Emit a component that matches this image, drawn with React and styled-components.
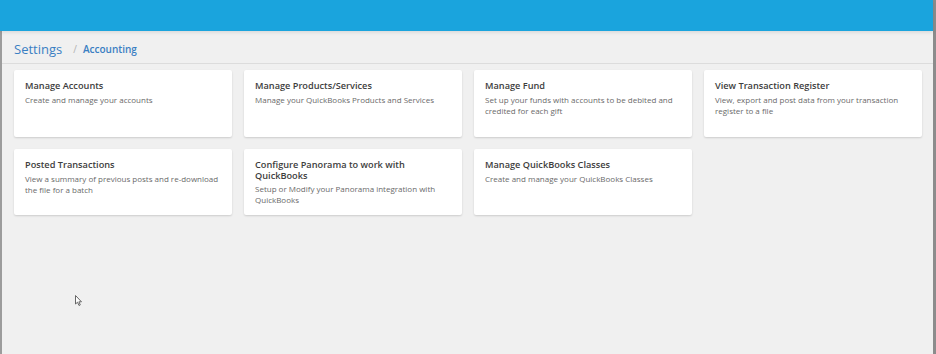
import React from "react";
import styled, { createGlobalStyle } from "styled-components";

const Global = createGlobalStyle`
  html, body { margin: 0; padding: 0; background: #f0f0f0; }
  body { font-family: "Open Sans", "Noto Sans", sans-serif; }
`;

const Frame = styled.div`
  display: flex;
  width: 936px;
  height: 354px;
  overflow: hidden;
  position: relative;
`;

const Main = styled.div`
  flex: 1;
  display: flex;
  flex-direction: column;
  min-width: 0;
`;

const ScrollEdge = styled.div`
  width: 3px;
  background: #8c8c8c;
`;

const Header = styled.header`
  height: 31px;
  background: #1aa4dd;
  box-shadow: 0 1px 4px rgba(0, 0, 0, 0.12);
  position: relative;
  z-index: 1;
`;

const Body = styled.div`
  flex: 1;
  border-left: 2px solid #9c9c9c;
  background: #f0f0f0;
  display: flex;
  flex-direction: column;
`;

const Breadcrumb = styled.nav`
  height: 33px;
  border-bottom: 1px solid #dcdcdc;
  display: flex;
  align-items: center;
  padding-left: 12px;
  padding-top: 4px;
  box-sizing: border-box;
  color: #3a7fc3;
`;

const Crumb = styled.span`
  font-size: ${(p) => (p.$root ? "13px" : "10px")};
  font-weight: ${(p) => (p.$root ? 400 : 600)};
`;

const Sep = styled.span`
  color: #b3b3b3;
  font-size: 10px;
  margin: 0 6px 0 11px;
`;

const Grid = styled.div`
  display: grid;
  grid-template-columns: repeat(4, 218px);
  grid-template-rows: 67px 66px;
  gap: 12px;
  padding: 6px 12px 0 12px;
`;

const Card = styled.div`
  background: #fff;
  border-radius: 2px;
  box-shadow: 0 1px 2px rgba(0, 0, 0, 0.15);
  padding: 11px 11px 0 11px;
  box-sizing: border-box;
`;

const Title = styled.div`
  font-size: 9.2px;
  font-weight: 600;
  color: #3d3d3d;
  line-height: 10.5px;
  margin-bottom: 2px;
`;

const Desc = styled.div`
  font-size: 8px;
  color: #6a6a6a;
  line-height: 11.3px;
`;

const Cursor = styled.svg`
  position: absolute;
  left: 75px;
  top: 295px;
`;

const cards = [
  ["Manage Accounts", "Create and manage your accounts"],
  ["Manage Products/Services", "Manage your QuickBooks Products and Services"],
  ["Manage Fund", "Set up your funds with accounts to be debited and credited for each gift"],
  ["View Transaction Register", "View, export and post data from your transaction register to a file"],
  ["Posted Transactions", "View a summary of previous posts and re-download the file for a batch"],
  ["Configure Panorama to work with QuickBooks", "Setup or Modify your Panorama integration with QuickBooks"],
  ["Manage QuickBooks Classes", "Create and manage your QuickBooks Classes"],
];

export default function App() {
  return (
    <>
      <Global />
      <Frame>
        <Main>
          <Header />
          <Body>
            <Breadcrumb>
              <Crumb $root>Settings</Crumb>
              <Sep>/</Sep>
              <Crumb>Accounting</Crumb>
            </Breadcrumb>
            <Grid>
              {cards.map(([t, d]) => (
                <Card key={t}>
                  <Title>{t}</Title>
                  <Desc>{d}</Desc>
                </Card>
              ))}
            </Grid>
          </Body>
        </Main>
        <ScrollEdge />
        <Cursor width="8" height="12" viewBox="0 0 8 12">
          <path d="M0.5 0.5 L0.5 9 L2.5 7.2 L4 10.5 L5.3 9.9 L3.9 6.8 L6.5 6.8 Z" fill="#fff" stroke="#666" strokeWidth="1" strokeLinejoin="round" />
        </Cursor>
      </Frame>
    </>
  );
}
